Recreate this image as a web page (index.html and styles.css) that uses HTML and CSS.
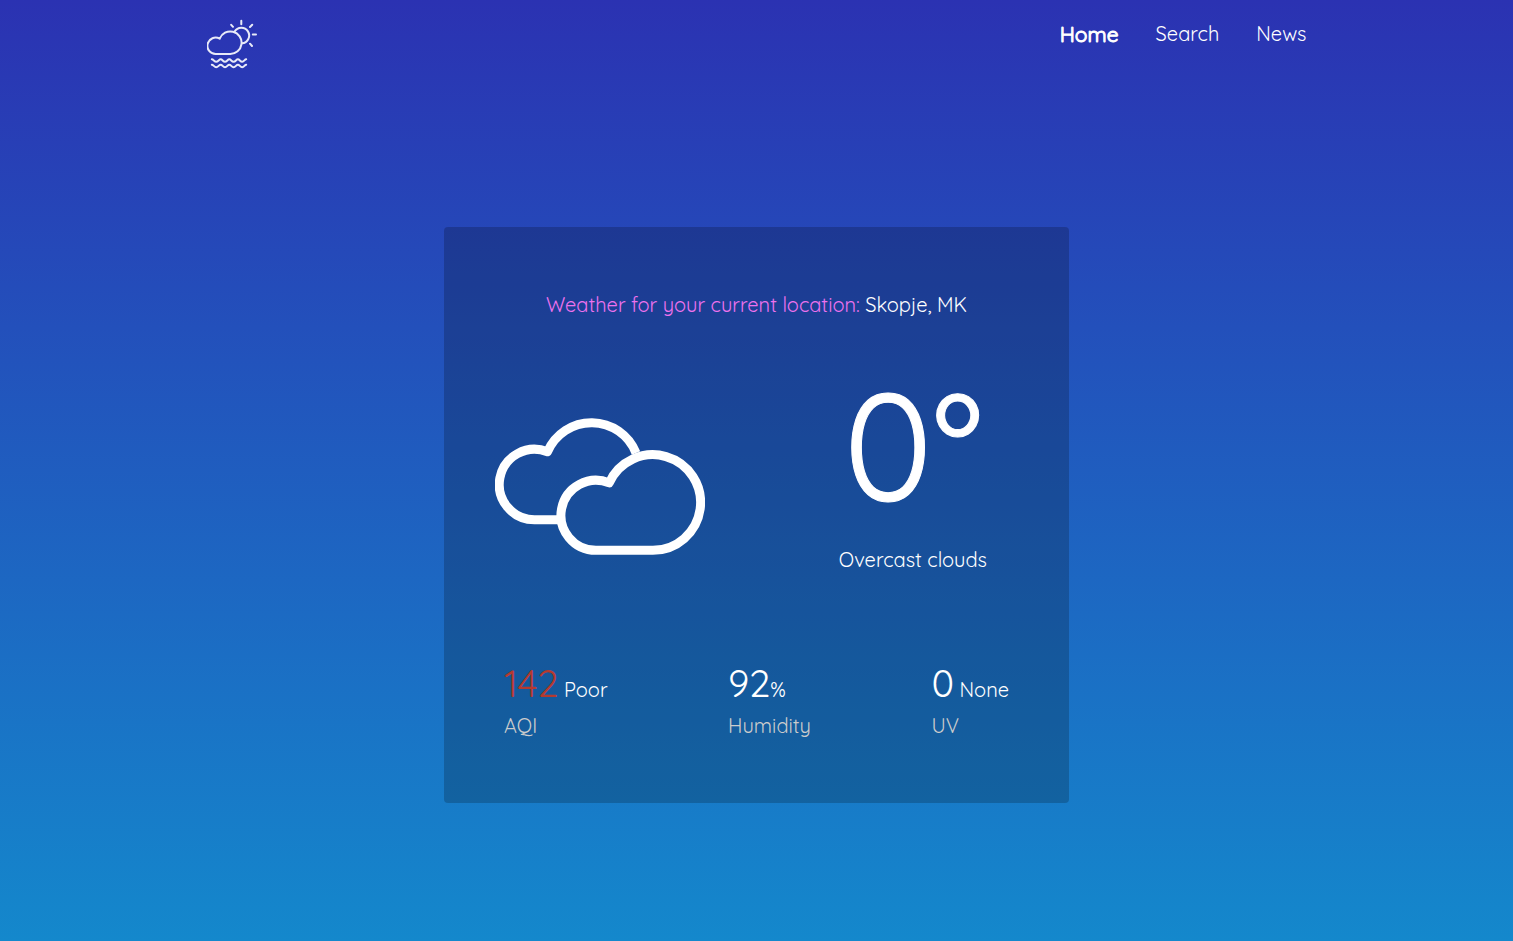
FILE: index.html
```html
<!DOCTYPE html>
<html lang="en">
<head>
<meta charset="utf-8">
<meta name="viewport" content="width=device-width, initial-scale=1">
<title>Weather</title>
<link rel="stylesheet" href="styles.css">
</head>
<body>
<header class="header">
  <a class="logo" href="#" aria-label="Weather home">
    <svg class="logo-icon" viewBox="10 9 50 52" aria-hidden="true">
      <path d="M18.8 44A8.2 8.2 0 1 1 22.7 28.7A11.3 11.3 0 1 1 33 44Z"/>
      <path d="M37.6 21.6A7.8 7.8 0 1 1 45 33.3"/>
      <path d="M44.3 10.8V14.2M34.2 14.8L36 16.8M55.2 14.8L53 17M55.8 24.5H59M53 33.7L55 36"/>
      <path d="M14.8 49.3C16.5 49.3 17.2 51.8 19.2 51.8S22 49.3 23.7 49.3S26 51.8 28 51.8S30.6 49.3 32.3 49.3S34.6 51.8 36.6 51.8S39.2 49.3 40.9 49.3S43.2 51.8 45.2 51.8S47.6 49.3 49.2 49.3"/>
      <path d="M14.8 54.7C16.5 54.7 17.2 57.2 19.2 57.2S22 54.7 23.7 54.7S26 57.2 28 57.2S30.6 54.7 32.3 54.7S34.6 57.2 36.6 57.2S39.2 54.7 40.9 54.7S43.2 57.2 45.2 57.2S47.6 54.7 49.2 54.7"/>
    </svg>
  </a>
  <nav class="nav">
    <a class="nav-link nav-link-active" href="#">Home</a>
    <a class="nav-link" href="#">Search</a>
    <a class="nav-link" href="#">News</a>
  </nav>
</header>
<main class="main">
  <section class="card">
    <p class="location"><span class="location-label">Weather for your current location:</span> Skopje, MK</p>
    <div class="current">
      <svg class="clouds" viewBox="15 18 210 138" role="img" aria-label="Overcast clouds">
        <path d="M79 119.7H54.5A35.2 35.2 0 1 1 67.5 51.8A47.8 47.8 0 0 1 156 53"/>
        <path d="M116 150.3A35 35 0 1 1 129.2 82.9A47.8 47.8 0 1 1 172.9 150.3Z"/>
      </svg>
      <div class="reading">
        <p class="temperature">0°</p>
        <p class="condition">Overcast clouds</p>
      </div>
    </div>
    <dl class="stats">
      <div class="stat">
        <dd><span class="value value-poor">142</span> Poor</dd>
        <dt>AQI</dt>
      </div>
      <div class="stat">
        <dd><span class="value">92</span>%</dd>
        <dt>Humidity</dt>
      </div>
      <div class="stat">
        <dd><span class="value">0</span> None</dd>
        <dt>UV</dt>
      </div>
    </dl>
  </section>
</main>
</body>
</html>
```
FILE: styles.css
```css
* {
  box-sizing: border-box;
  margin: 0;
}

body {
  display: flex;
  flex-direction: column;
  min-height: 100vh;
  background: linear-gradient(to bottom, #2b32b2, #1488cc);
  color: #fff;
  font: 20px/26px Quicksand, Lato, sans-serif;
}

.header {
  display: flex;
  justify-content: space-between;
  align-items: flex-start;
  width: 100%;
  max-width: 1100px;
  margin: 0 auto;
  padding-top: 19px;
}

.logo-icon {
  display: block;
  width: 50px;
  fill: none;
  stroke: #e8eaf8;
  stroke-width: 2;
  stroke-linecap: round;
  stroke-linejoin: round;
}

.nav {
  display: flex;
  gap: 37px;
  padding-top: 2px;
}

.nav-link {
  color: #fff;
  text-decoration: none;
}

.nav-link-active {
  font-size: 21px;
  -webkit-text-stroke: 1px #fff;
}

.main {
  flex: 1;
  display: flex;
  align-items: center;
  justify-content: center;
  padding-top: 17px;
}

.card {
  width: 100%;
  max-width: 625px;
  padding: 65px 50px 64px;
  border-radius: 4px;
  background: rgba(0, 0, 0, 0.2);
}

.location {
  text-align: center;
}

.location-label {
  color: #ee72ee;
}

.current {
  display: flex;
  justify-content: space-between;
  align-items: center;
  margin-top: 36px;
  padding: 0 32px 0 1px;
}

.clouds {
  width: 210px;
  margin-top: 34px;
  fill: none;
  stroke: #fff;
  stroke-width: 9;
  stroke-linejoin: round;
}

.reading {
  text-align: center;
}

.temperature {
  font-size: 150px;
  line-height: 180px;
  -webkit-text-stroke: 1px #fff;
}

.condition {
  line-height: 52px;
}

.stats {
  display: flex;
  justify-content: space-between;
  margin-top: 74px;
  padding: 0 10px;
}

.stat {
  display: flex;
  flex-direction: column;
}

.stat dd {
  line-height: 46px;
}

.stat dt {
  color: #ccc;
}

.value {
  font-size: 38px;
}

.value-poor {
  color: #b43a30;
}
```
